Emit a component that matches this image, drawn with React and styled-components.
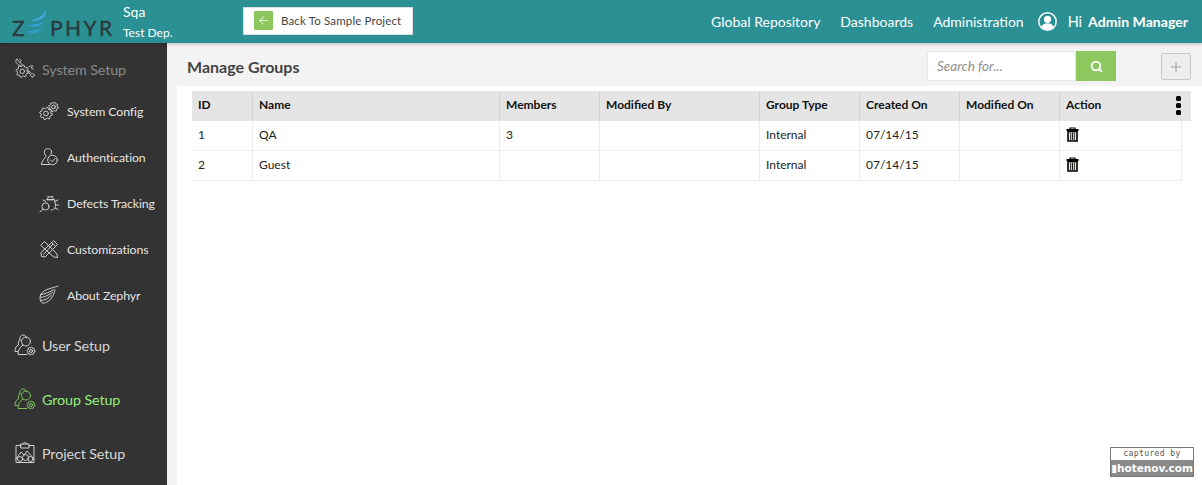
import React from "react";
import styled, { createGlobalStyle } from "styled-components";
import { ArrowLeft, Plus, Search } from "lucide-react";

const Global = createGlobalStyle`
  html, body { margin: 0; padding: 0; height: 100%; overflow: hidden; background: #fff; }
  body { font-family: Lato, "Open Sans", sans-serif; }
  * { box-sizing: border-box; }
`;

const Page = styled.div`
  width: 1202px;
  height: 485px;
  display: flex;
  flex-direction: column;
  overflow: hidden;
  position: relative;
`;

const Header = styled.header`
  height: 43px;
  flex: none;
  background: #2a9094;
  display: flex;
  align-items: center;
  color: #fff;
  box-shadow: 0 1px 3px rgba(0, 0, 0, 0.25);
  position: relative;
  z-index: 2;
`;

const Logo = styled.div`
  width: 111px;
  margin-left: 12px;
  height: 43px;
  display: flex;
  align-items: center;
  padding-top: 12px;
  color: #2c3a3e;
  font-size: 21px;
  line-height: 1;
  letter-spacing: 2.4px;
  white-space: nowrap;
  -webkit-text-stroke: 0.4px #2c3a3e;
`;

const LogoWave = styled.svg`
  width: 26px;
  height: 28px;
  margin: -12px -1px 0 -2px;
  flex: none;
`;

const Project = styled.div`
  width: 120px;
  align-self: flex-start;
  padding-top: 3px;
  & div:first-child { font-size: 14px; line-height: 17px; }
  & div:last-child { font-size: 12px; line-height: 17px; margin-top: 4px; }
`;

const BackButton = styled.button`
  width: 170px;
  height: 28px;
  margin-top: -1px;
  background: #fff;
  border: 1px solid #ddd;
  padding: 0 0 1px 10px;
  display: flex;
  align-items: center;
  gap: 8px;
  font: 11.5px Lato, sans-serif;
  letter-spacing: 0.15px;
  color: #444;
`;

const BackIcon = styled.span`
  width: 19px;
  height: 19px;
  background: #8cc85e;
  border-radius: 1px;
  display: flex;
  align-items: center;
  justify-content: center;
  color: #fff;
`;

const Nav = styled.nav`
  margin-left: auto;
  margin-right: 14px;
  display: flex;
  align-items: center;
  font-size: 14px;
  gap: 19px;
`;

const NavLink = styled.span`
  margin-right: ${(p) => p.$shift || 0}px;
`;

const UserBox = styled.div`
  display: flex;
  align-items: center;
  margin-left: -5px;
  font-size: 14.5px;
`;

const Hi = styled.span`
  margin: 0 6px 0 11px;
`;

const UserName = styled.b`
  font-weight: 700;
  font-size: 14.1px;
`;

const Body = styled.div`
  flex: 1;
  display: flex;
  min-height: 0;
`;

const Sidebar = styled.aside`
  width: 167px;
  flex: none;
  background: #333;
  display: flex;
  flex-direction: column;
`;

const MainItem = styled.div`
  height: ${(p) => p.$h}px;
  padding-top: ${(p) => p.$top || 0}px;
  padding-bottom: 2px;
  display: flex;
  align-items: center;
  gap: 6px;
  padding-left: 14px;
  font-size: 14.3px;
  letter-spacing: -0.1px;
  color: ${(p) => p.$color || "#d6d6d6"};
`;

const SubItem = styled.div`
  height: 46px;
  display: flex;
  align-items: center;
  gap: 8px;
  padding: 0 0 2px 39px;
  font-size: 12.3px;
  letter-spacing: -0.1px;
  color: #e4e4e4;
`;

const Ico = styled.svg`
  flex: none;
  width: ${(p) => p.$s}px;
  height: ${(p) => p.$s}px;
  fill: none;
  stroke: currentColor;
  stroke-width: 1;
  stroke-linejoin: round;
  stroke-linecap: round;
  color: ${(p) => p.$color || "#cfcfcf"};
`;

const Main = styled.main`
  flex: 1;
  min-width: 0;
  background: #f3f3f3;
  display: flex;
  flex-direction: column;
`;

const TitleBar = styled.div`
  height: 43px;
  flex: none;
  display: flex;
  align-items: flex-start;
  padding: 8px 11px 0 20px;
`;

const Title = styled.h1`
  margin: 0;
  font-size: 16px;
  font-weight: 700;
  color: #444;
  line-height: 1;
  padding-top: 8px;
`;

const SearchBox = styled.div`
  margin-left: auto;
  display: flex;
  height: 30px;
`;

const SearchInput = styled.input`
  width: 149px;
  height: 30px;
  border: 1px solid #e6e6e6;
  background: #fff;
  padding: 0 9px;
  font: italic 13.5px Lato, sans-serif;
  color: #888;
  &::placeholder { color: #8e8e8e; opacity: 1; }
`;

const SearchButton = styled.span`
  width: 40px;
  height: 30px;
  background: #8cc85e;
  display: flex;
  align-items: center;
  justify-content: center;
  color: #fff;
`;

const AddButton = styled.span`
  width: 30px;
  height: 27px;
  margin: 2px 0 0 45px;
  border: 1px solid #c8c8c8;
  border-radius: 2px;
  background: #eee;
  display: flex;
  align-items: center;
  justify-content: center;
  color: #8a8a8a;
`;

const Content = styled.div`
  flex: 1;
  margin-left: 10px;
  background: #fff;
  padding: 5px 11px 0 15px;
`;

const Row = styled.div`
  display: grid;
  grid-template-columns: 61px 247px 100px 160px 100px 100px 100px 1fr;
  height: 30px;
  margin-right: ${(p) => (p.$head ? 0 : 9)}px;
  background: ${(p) => (p.$head ? "#e5e5e5" : "#fff")};
  border-bottom: 1px solid ${(p) => (p.$head ? "#e5e5e5" : "#ececec")};
  color: ${(p) => (p.$head ? "#111" : "#222")};
  font-size: 12px;
  font-weight: ${(p) => (p.$head ? 700 : 400)};
  ${(p) => !p.$head && "border-right: 1px solid #ececec;"}
`;

const Cell = styled.div`
  display: flex;
  align-items: center;
  padding: 0 0 2px 6px;
  position: relative;
  &:not(:last-child) {
    border-right: 1px solid ${(p) => (p.$head ? "#d2d2d2" : "#ececec")};
  }
`;

const MoreDots = styled.span`
  position: absolute;
  right: 10px;
  top: 5px;
  display: flex;
  flex-direction: column;
  gap: 2px;
  & i {
    width: 5px;
    height: 5px;
    border-radius: 1.5px;
    background: #000;
  }
`;

const Badge = styled.div`
  position: absolute;
  left: 1110px;
  top: 447px;
  width: 84px;
  height: 30px;
  border: 1px solid #777;
  background: #fff;
  font-family: "DejaVu Sans Mono", monospace;
  text-align: center;
  overflow: hidden;
  z-index: 3;
`;

const BadgeTop = styled.div`
  height: 12px;
  font-size: 8px;
  line-height: 11px;
  letter-spacing: 0.4px;
  color: #555;
`;

const BadgeBottom = styled.div`
  height: 17px;
  background: #8a8a8a;
  color: #fff;
  font-family: "DejaVu Sans", sans-serif;
  font-weight: 700;
  font-size: 10.5px;
  line-height: 17px;
  white-space: nowrap;
`;

// builds a gear outline around cx,cy
const gear = (cx, cy, r, teeth) => {
  const pts = [];
  const n = teeth * 4;
  for (let i = 0; i < n; i++) {
    const a = ((i + 0.5) / n) * Math.PI * 2;
    const rr = i % 4 < 2 ? r : r * 0.78;
    pts.push(`${(cx + Math.cos(a) * rr).toFixed(2)} ${(cy + Math.sin(a) * rr).toFixed(2)}`);
  }
  return `M${pts.join("L")}Z`;
};

const Gears = () => (
  <Ico $s={20} viewBox="0 0 20 20">
    <path d={gear(7, 12.5, 6.3, 8)} />
    <circle cx="7" cy="12.5" r="2.400" />
    <path d={gear(14.500, 6, 4.800, 8)} />
    <circle cx="14.500" cy="6" r="1.900" />
  </Ico>
);

const SystemIcon = () => (
  <Ico $s={22} viewBox="0 0 24 24">
    <path d="M3 1.500c-1.500 1-1.500 3 0 4l3.500 3.500 2-2L5 3.500C5 2.500 4 1.500 3 1.500z" />
    <path d="M6 1l2 2-1.500 1.500" />
    <path d={gear(9, 14.500, 6.800, 8)} />
    <circle cx="9" cy="14.500" r="2.500" />
    <path d="M15 13l4 4c1.500-.5 3 .5 3.500 2l-1.500 .5-.5 1.500c-1.500 0-2.500-1.500-2.500-3l-3.500-3" />
    <path d="M16 10c1-1.500 3-2 4.500-1l-1.500 1 .5 1.500 1.500 .5" />
  </Ico>
);

const AuthIcon = () => (
  <Ico $s={20} viewBox="0 0 20 20">
    <path d="M6.500 2.500c2.500-2 6-.5 6 2.500 0 .8-.2 1.500-.6 2.200" />
    <path d="M5.600 3.500c-.8 2 0 4.500 1.700 5.700-1.500 1.800-4.300 4.500-5 8.300h8" />
    <circle cx="13.500" cy="13" r="4.800" />
    <path d="M11.500 13l1.600 1.600 3-3.200" />
  </Ico>
);

const BugIcon = () => (
  <Ico $s={20} viewBox="0 0 20 20">
    <path d="M8 6.500c0-4 6.500-4 6.500 0z" />
    <path d="M7.500 6.500h8l1 6c0 3.500-2.500 4.500-4.500 4.500" />
    <path d="M8.500 3l1.500 1.500M14 3l-1.500 1.500M16 8.500l3-1.500M16.500 12h3M16 15l3 1.500M7 8.500l-3-1.500" />
    <circle cx="6.500" cy="13.500" r="3.600" />
    <path d="M3.800 16L1 19" />
  </Ico>
);

const ToolsIcon = () => (
  <Ico $s={20} viewBox="0 0 20 20">
    <path d="M2 6L5.500 2.500 18 15l.5 3.500-3.500-.5z" />
    <path d="M15 2l3.500 3.500L6 18l-3.500-.5L2 14z" />
    <path d="M4.500 15.500L14 5M13 3.800l3.200 3.200" />
  </Ico>
);

const WingIcon = () => (
  <Ico $s={20} viewBox="0 0 20 20">
    <path d="M19 1C14 3 5 4 2 9c-1.500 3-1 6 0 8 1.500 2 4 1 6 0 4-2 7-7 8-12" />
    <path d="M2 9.500c4-.5 9-2.500 13-5M1.500 12.500c4-.5 9-2.500 12-5M2 15.500c4 0 8-2.500 10-5" />
  </Ico>
);

const UsersIcon = ({ color }) => (
  <Ico $s={22} $color={color} viewBox="0 0 22 22">
    <path d="M6 6.500C5 3 7 1 9 1s3 1 3.500 3" />
    <path d="M4.500 11C4 8 4.500 6.500 6 5.500" />
    <circle cx="12" cy="7.500" r="4.500" />
    <path d="M9 11c-3 2-5 5-5 9.500h9M3.500 17.500H1c0-3 1-5 3-6.500" />
    <path d={gear(17, 17, 4, 8)} />
    <circle cx="17" cy="17" r="1.500" />
  </Ico>
);

const ProjectIcon = () => (
  <Ico $s={22} viewBox="0 0 22 22">
    <path d="M7 3.500H2v17h18v-17h-5" />
    <path d="M7 2h8v4H7zM9 2c0-2 4-2 4 0" />
    <path d="M2 17l5-7 3 3 3-4 7 8" />
    <circle cx="11.500" cy="15.500" r="3" />
    <circle cx="6" cy="17" r="2.500" />
    <circle cx="16.500" cy="17" r="2.500" />
  </Ico>
);

const UserCircle = () => (
  <svg width="19" height="19" viewBox="0 0 19 19">
    <circle cx="9.500" cy="9.500" r="8.700" fill="none" stroke="#fff" strokeWidth="1.500" />
    <circle cx="9.500" cy="7.300" r="3.600" fill="#fff" />
    <path d="M3.500 15c1-2.800 3.200-3.700 6-3.700s5 .9 6 3.700a8.300 8.300 0 0 1-12 0z" fill="#fff" />
  </svg>
);

const Trash = () => (
  <svg width="13" height="15" viewBox="0 0 13 15">
    <path d="M4 2.200V1h5v1.200" fill="none" stroke="#000" strokeWidth="1.200" />
    <path d="M0.500 2h12v2h-12z" fill="#000" />
    <path d="M2 4.500h9v9.500H2z" fill="#f4e6c8" stroke="#000" strokeWidth="1.600" />
    <path d="M4.700 5.500v7.500M6.500 5.500v7.500M8.300 5.500v7.500" stroke="#222" strokeWidth="1" />
  </svg>
);

const columns = ["ID", "Name", "Members", "Modified By", "Group Type", "Created On", "Modified On", "Action"];

const groups = [
  ["1", "QA", "3", "", "Internal", "07/14/15", ""],
  ["2", "Guest", "", "", "Internal", "07/14/15", ""],
];

const subItems = [
  ["System Config", <Gears key="g" />],
  ["Authentication", <AuthIcon key="a" />],
  ["Defects Tracking", <BugIcon key="b" />],
  ["Customizations", <ToolsIcon key="t" />],
  ["About Zephyr", <WingIcon key="w" />],
];

const App = () => (
  <Page>
    <Global />
    <Header>
      <Logo>
        Z
        <LogoWave viewBox="0 0 26 28">
          <path d="M3 17c6-1 12-1 17-4-2 3-5 5-9 5.500-3 .4-6 .2-8-1.500z" fill="#2e9fd4" />
          <path d="M2 23c6 0 12-1 15-4-2 4-6 6-10 6-2 0-4-.5-5-2z" fill="#2e9fd4" />
          <path d="M6 12c6-1 11-3 15-10 1 5-3 9-8 10.500-2.500.7-5 .5-7-.5z" fill="#3aa9dc" />
        </LogoWave>
        PHYR
      </Logo>
      <Project>
        <div>Sqa</div>
        <div>Test Dep.</div>
      </Project>
      <BackButton>
        <BackIcon>
          <ArrowLeft size={13} strokeWidth={1.5} />
        </BackIcon>
        Back To Sample Project
      </BackButton>
      <Nav>
        <NavLink $shift={1}>Global Repository</NavLink>
        <NavLink $shift={1}>Dashboards</NavLink>
        <NavLink>Administration</NavLink>
        <UserBox>
          <UserCircle />
          <Hi>Hi</Hi>
          <UserName>Admin Manager</UserName>
        </UserBox>
      </Nav>
    </Header>
    <Body>
      <Sidebar>
        <MainItem $h={46} $top={8} $color="#8a8a8a">
          <SystemIcon />
          System Setup
        </MainItem>
        {subItems.map(([label, icon]) => (
          <SubItem key={label}>
            {icon}
            {label}
          </SubItem>
        ))}
        <MainItem $h={54}>
          <UsersIcon />
          User Setup
        </MainItem>
        <MainItem $h={54} $color="#93f07a">
          <UsersIcon color="#7cc05c" />
          Group Setup
        </MainItem>
        <MainItem $h={54}>
          <ProjectIcon />
          Project Setup
        </MainItem>
      </Sidebar>
      <Main>
        <TitleBar>
          <Title>Manage Groups</Title>
          <SearchBox>
            <SearchInput placeholder="Search for..." readOnly />
            <SearchButton>
              <Search size={13} strokeWidth={3.5} />
            </SearchButton>
          </SearchBox>
          <AddButton>
            <Plus size={16} strokeWidth={1.2} />
          </AddButton>
        </TitleBar>
        <Content>
          <Row $head>
            {columns.map((c, i) => (
              <Cell key={c} $head>
                {c}
                {i === columns.length - 1 && (
                  <MoreDots>
                    <i />
                    <i />
                    <i />
                  </MoreDots>
                )}
              </Cell>
            ))}
          </Row>
          {groups.map((g) => (
            <Row key={g[0]}>
              {g.map((v, i) => (
                <Cell key={i}>{v}</Cell>
              ))}
              <Cell>
                <Trash />
              </Cell>
            </Row>
          ))}
        </Content>
      </Main>
    </Body>
    <Badge>
      <BadgeTop>captured by</BadgeTop>
      <BadgeBottom>▮hotenov.com</BadgeBottom>
    </Badge>
  </Page>
);

export default App;
